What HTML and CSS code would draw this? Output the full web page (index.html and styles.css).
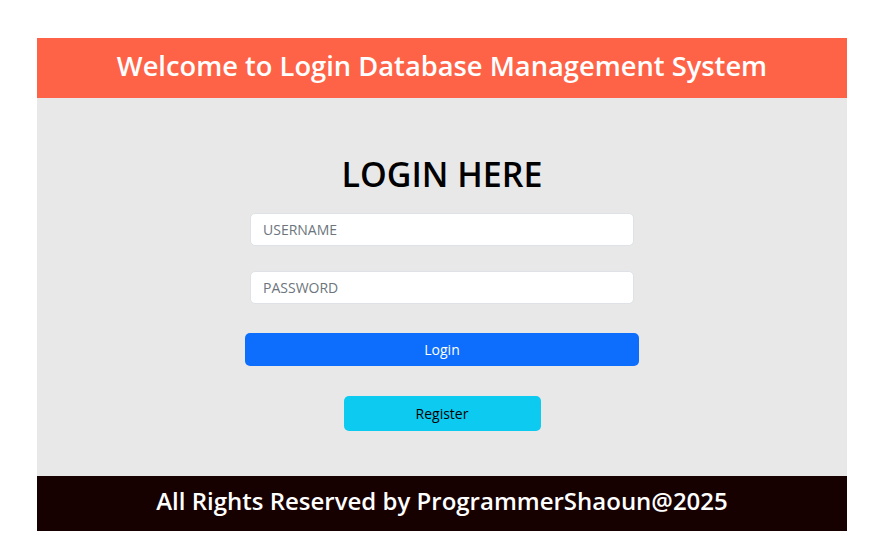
FILE: index.html
```html
<!DOCTYPE html>
<html>
<head>
<meta charset="utf-8">
<title>Login</title>
<link rel="stylesheet" href="styles.css">
</head>
<body>
<div class="page">
  <header class="top">Welcome to Login Database Management System</header>
  <main class="main">
    <h1 class="title">LOGIN HERE</h1>
    <form class="form">
      <input class="field" type="text" placeholder="USERNAME">
      <input class="field" type="password" placeholder="PASSWORD">
      <button type="button" class="btn btn-login">Login</button>
      <button type="button" class="btn btn-register">Register</button>
    </form>
  </main>
  <footer class="bottom">All Rights Reserved by ProgrammerShaoun@2025</footer>
</div>
</body>
</html>
```

FILE: styles.css
```css
html, body {
  margin: 0;
  padding: 0;
  background: #ffffff;
}
body {
  font-family: "Open Sans", "Noto Sans", sans-serif;
}
.page {
  width: 810px;
  margin: 38px 0 0 37px;
  display: flex;
  flex-direction: column;
}
.top {
  height: 60px;
  box-sizing: border-box;
  padding-bottom: 5px;
  background: #ff6347;
  color: #ffffff;
  font-weight: 600;
  font-size: 27.3px;
  display: flex;
  align-items: center;
  justify-content: center;
}
.main {
  height: 378px;
  background: #e8e8e8;
  display: flex;
  flex-direction: column;
  align-items: center;
  box-sizing: border-box;
  padding-top: 52px;
}
.title {
  margin: 0;
  height: 50px;
  line-height: 48px;
  font-size: 34px;
  font-weight: 600;
  color: #000000;
}
.form {
  display: flex;
  flex-direction: column;
  align-items: center;
  margin-top: 13px;
}
.field {
  width: 384px;
  height: 33px;
  box-sizing: border-box;
  border: 1px solid #dee2e6;
  border-radius: 5px;
  background: #ffffff;
  padding: 0 12px;
  font-family: inherit;
  font-size: 14px;
  color: #212529;
  margin-bottom: 25px;
  outline: none;
}
.field::placeholder {
  color: #6c757d;
}
.field + .field {
  margin-bottom: 29px;
}
.btn {
  border: none;
  border-radius: 5px;
  font-family: inherit;
  font-size: 14px;
  padding: 0;
  cursor: pointer;
}
.btn-login {
  width: 394px;
  height: 33px;
  background: #0d6efd;
  color: #ffffff;
  margin-bottom: 30px;
}
.btn-register {
  width: 197px;
  height: 35px;
  background: #0dcaf0;
  color: #000000;
}
.bottom {
  height: 55px;
  box-sizing: border-box;
  padding-bottom: 6px;
  background: #170000;
  color: #ffffff;
  font-weight: 600;
  font-size: 24px;
  display: flex;
  align-items: center;
  justify-content: center;
}
```
